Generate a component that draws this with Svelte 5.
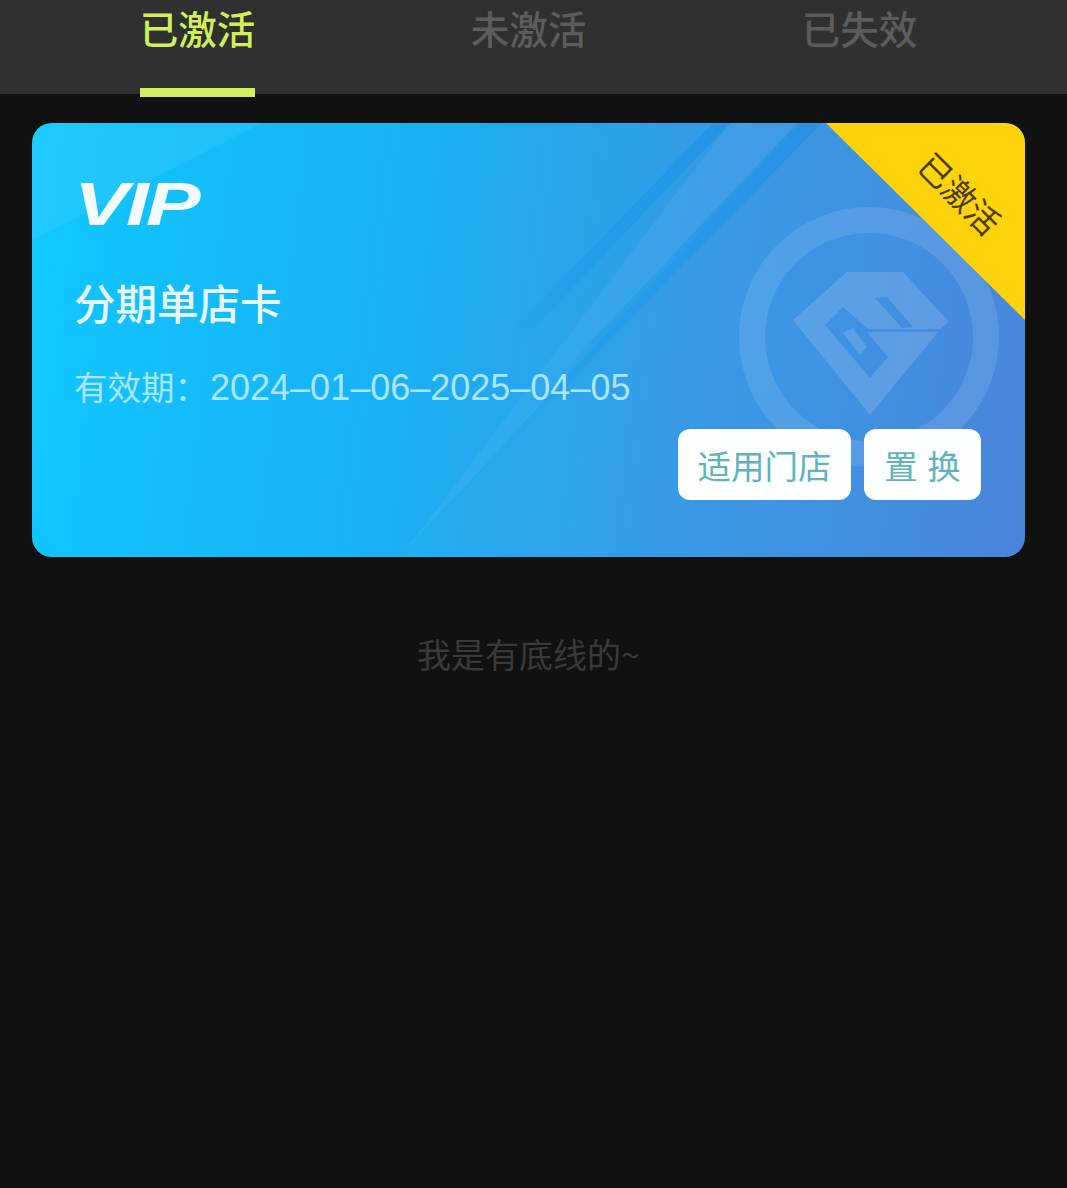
<script>
  let tabs = [
    { label: '已激活', active: true },
    { label: '未激活', active: false },
    { label: '已失效', active: false }
  ];
</script>

<div class="page">
  <nav class="tabs">
    {#each tabs as tab}
      <div class="tab" class:active={tab.active}>
        <span class="tab-label">{tab.label}</span>
      </div>
    {/each}
  </nav>

  <section class="card">
    <svg class="decor" viewBox="32 123 993 434" aria-hidden="true">
      <defs>
        <linearGradient id="stripe-a" gradientUnits="userSpaceOnUse" x1="722" y1="123" x2="505" y2="345">
          <stop offset="0" stop-color="#1a8fe6" stop-opacity="0.6" />
          <stop offset="0.6" stop-color="#1a9bea" stop-opacity="0.55" />
          <stop offset="1" stop-color="#1a9bea" stop-opacity="0" />
        </linearGradient>
        <linearGradient id="stripe-b" gradientUnits="userSpaceOnUse" x1="810" y1="123" x2="525" y2="415">
          <stop offset="0" stop-color="#1a8fe6" stop-opacity="0.5" />
          <stop offset="0.7" stop-color="#1a9bea" stop-opacity="0.45" />
          <stop offset="1" stop-color="#1a9bea" stop-opacity="0" />
        </linearGradient>
      </defs>
      <polygon points="32,240 32,123 262,123" fill="#fff" opacity="0.06" />
      <polygon points="400,557 800,123 730,123" fill="#fff" opacity="0.05" />
      <polygon points="400,557 822,123 1025,123 1025,557" fill="#fff" opacity="0.015" />
      <polygon points="713,123 730,123 518,345 498,345" fill="url(#stripe-a)" />
      <polygon points="797,123 822,123 537,415 522,415" fill="url(#stripe-b)" />
      <circle cx="869" cy="337" r="117" fill="none" stroke="#fff" stroke-width="26" opacity="0.11" />
      <path
        fill="#fff"
        opacity="0.14"
        fill-rule="evenodd"
        d="M847 272 L903 272 L949 322 L940 329 L868 329 L843 307 L825 325 L870 378 L888 357 L867 332 L938 332 L870 415 L793 320 Z
           M875 298 L887 297 L913 327 L902 328 Z
           M843 333 L853 328 L867 347 L860 355 Z"
      />
    </svg>

    <div class="corner"><span>已激活</span></div>

    <div class="card-body">
      <div class="vip">VIP</div>
      <h2 class="card-name">分期单店卡</h2>
      <p class="validity">有效期：<span class="dates">2024–01–06–2025–04–05</span></p>
      <div class="actions">
        <button class="action wide">适用门店</button>
        <button class="action">置 换</button>
      </div>
    </div>
  </section>

  <p class="bottom-line">我是有底线的~</p>
</div>

<style>
  :global(body) {
    margin: 0;
    background: #111112;
  }

  .page {
    height: 1188px;
    overflow: hidden;
    background: #111112;
    font-family: "Noto Sans CJK SC", "Liberation Sans", sans-serif;
  }

  .tabs {
    display: grid;
    grid-template-columns: repeat(3, 1fr);
    height: 94px;
    padding: 0 42px 0 32px;
    background: #303030;
  }

  .tab {
    display: flex;
    justify-content: center;
  }

  .tab-label {
    position: relative;
    height: 94px;
    padding-top: 5px;
    box-sizing: border-box;
    font-size: 38.5px;
    line-height: 44px;
    font-weight: 500;
    color: #5c5c5c;
  }

  .tab.active .tab-label {
    color: #d1ee5c;
  }

  .tab.active .tab-label::after {
    content: '';
    position: absolute;
    left: 0;
    right: 0;
    bottom: -3px;
    height: 9px;
    background: #d1ee5c;
  }

  .card {
    position: relative;
    height: 434px;
    margin: 29px 42px 0 32px;
    border-radius: 20px;
    overflow: hidden;
    background: linear-gradient(97deg, #10c8ff 0%, #18b2f5 35%, #3698e6 68%, #4784da 100%);
  }

  .decor {
    position: absolute;
    inset: 0;
    width: 100%;
    height: 100%;
  }

  .corner {
    position: absolute;
    top: 0;
    right: 0;
    width: 199px;
    height: 197px;
    background: #ffd30a;
    clip-path: polygon(0 0, 100% 0, 100% 100%);
  }

  .corner span {
    position: absolute;
    left: 85px;
    top: 50px;
    font-size: 33px;
    line-height: 40px;
    white-space: nowrap;
    color: #4a3d10;
    transform: rotate(45deg);
  }

  .card-body {
    position: relative;
    height: 100%;
    box-sizing: border-box;
    padding: 45px 44px 0 42px;
    display: flex;
    flex-direction: column;
    color: #fff;
  }

  .vip {
    height: 72px;
    font-family: "Liberation Sans", sans-serif;
    font-size: 62px;
    line-height: 72px;
    font-weight: 700;
    font-style: italic;
    letter-spacing: -2px;
    transform: scaleX(1.32);
    transform-origin: left center;
    color: #f4fbff;
  }

  .card-name {
    margin: 37px 0 0;
    font-size: 41.5px;
    line-height: 50px;
    font-weight: 500;
    color: #e8f7ff;
  }

  .validity {
    margin: 37px 0 0;
    font-size: 33.5px;
    line-height: 44px;
    color: #a9e6fb;
  }

  .dates {
    margin-left: 2px;
    font-family: "Liberation Sans", sans-serif;
    font-size: 36px;
  }

  .actions {
    display: flex;
    justify-content: flex-end;
    gap: 13px;
    margin-top: 19px;
  }

  .action {
    width: 117px;
    height: 71px;
    padding: 0;
    border: none;
    border-radius: 12px;
    background: #fdfefe;
    font-family: inherit;
    font-size: 33.5px;
    word-spacing: 2px;
    color: #5fb3bd;
  }

  .action.wide {
    width: 173px;
  }

  .bottom-line {
    margin: 74px 10px 0 0;
    text-align: center;
    font-size: 34px;
    line-height: 46px;
    color: #3a3a3a;
  }
</style>
